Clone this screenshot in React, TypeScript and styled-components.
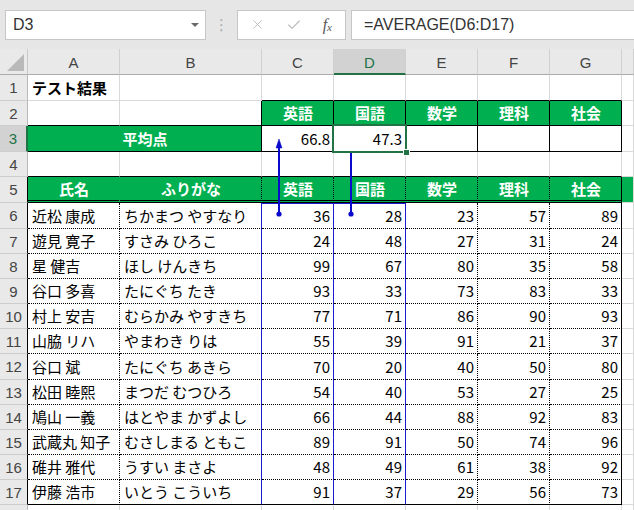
import React from "react";
import styled, { createGlobalStyle, css } from "styled-components";
import { X, Check } from "lucide-react";

const GlobalStyle = createGlobalStyle`
	html, body {
		margin: 0;
		padding: 0;
		background: #ffffff;
		overflow: hidden;
	}
`;

const GREEN = "#00b050";
const SELECT = "#217346";
const GRID = "1px solid #d9d9d9";
const BLACK = "1px solid #000000";
const DOT = "1px dotted #000000";
const BLUE = "1px solid #1a1ad0";
const DOUBLE = "3px double #000000";

const COLS = ["A", "B", "C", "D", "E", "F", "G", ""];
const ROW_HEIGHTS = [26, 25, 26, 25, 26, 26, 25, 25, 25, 25, 25, 26, 25, 25, 25, 25, 25, 20];

const subjects = ["英語", "国語", "数学", "理科", "社会"];

const students: [string, string, number[]][] = [
	["近松 康成", "ちかまつ やすなり", [36, 28, 23, 57, 89]],
	["遊見 寛子", "すさみ ひろこ", [24, 48, 27, 31, 24]],
	["星 健吉", "ほし けんきち", [99, 67, 80, 35, 58]],
	["谷口 多喜", "たにぐち たき", [93, 33, 73, 83, 33]],
	["村上 安吉", "むらかみ やすきち", [77, 71, 86, 90, 93]],
	["山脇 リハ", "やまわき りは", [55, 39, 91, 21, 37]],
	["谷口 斌", "たにぐち あきら", [70, 20, 40, 50, 80]],
	["松田 睦熙", "まつだ むつひろ", [54, 40, 53, 27, 25]],
	["鳩山 一義", "はとやま かずよし", [66, 44, 88, 92, 83]],
	["武蔵丸 知子", "むさしまる ともこ", [89, 91, 50, 74, 96]],
	["碓井 雅代", "うすい まさよ", [48, 49, 61, 38, 92]],
	["伊藤 浩市", "いとう こういち", [91, 37, 29, 56, 73]],
];

const App = () => {
	const dataRight = [DOT, BLUE, BLUE, BLUE, DOT, DOT, BLACK, GRID];

	const rows: React.ReactNode[] = [];

	// row 1
	rows.push(
		<RowHead key="h1">1</RowHead>,
		<Cell key="1a" $bold>テスト結果</Cell>,
		...COLS.slice(1).map((c, i) => (
			<Cell key={"1" + c} $bottom={i >= 1 && i <= 5 ? BLACK : GRID} />
		))
	);

	// row 2
	rows.push(
		<RowHead key="h2">2</RowHead>,
		<Cell key="2a" $bottom={BLACK} />,
		<Cell key="2b" $bottom={BLACK} $right={BLACK} />,
		...subjects.map((s) => (
			<Cell key={"2" + s} $fill $bold $align="center" $right={BLACK} $bottom={BLACK}>
				{s}
			</Cell>
		)),
		<Cell key="2h" />
	);

	// row 3
	rows.push(
		<RowHead key="h3" $selected>3</RowHead>,
		<Cell key="3ab" $span={2} $fill $bold $align="center" $right={BLACK} $bottom={BLACK}>
			平均点
		</Cell>,
		<Cell key="3c" $align="right" $right={BLACK} $bottom={BLACK}>66.8</Cell>,
		<Cell key="3d" $align="right" $right={BLACK} $bottom={BLACK} $active>47.3</Cell>,
		<Cell key="3e" $right={BLACK} $bottom={BLACK} />,
		<Cell key="3f" $right={BLACK} $bottom={BLACK} />,
		<Cell key="3g" $right={BLACK} $bottom={BLACK} />,
		<Cell key="3h" />
	);

	// row 4
	rows.push(
		<RowHead key="h4">4</RowHead>,
		...COLS.map((c, i) => <Cell key={"4" + i} $bottom={i < 7 ? BLACK : GRID} />)
	);

	// row 5
	const heads = ["氏名", "ふりがな", ...subjects];
	const headRight = [`1px solid ${GREEN}`, DOT, DOT, DOT, DOT, DOT, BLACK];
	rows.push(
		<RowHead key="h5" $edge>5</RowHead>,
		...heads.map((h, i) => (
			<Cell key={"5" + h} $fill $bold $align="center" $right={headRight[i]} $bottom={DOUBLE}>
				{h}
			</Cell>
		)),
		<Cell key="5h" $fill />
	);

	// rows 6-17
	students.forEach(([name, kana, scores], r) => {
		const last = r === students.length - 1;
		const bottom = last ? BLACK : DOT;
		const n = r + 6;
		rows.push(
			<RowHead key={"h" + n} $edge>{n}</RowHead>,
			<Cell key={n + "a"} $right={dataRight[0]} $bottom={bottom}>{name}</Cell>,
			<Cell key={n + "b"} $right={dataRight[1]} $bottom={bottom}>{kana}</Cell>,
			...scores.map((v, i) => (
				<Cell
					key={n + "s" + i}
					$align="right"
					$right={dataRight[i + 2]}
					$bottom={bottom}
					$blueTop={r === 0 && i < 2}
				>
					{v}
				</Cell>
			)),
			<Cell key={n + "h"} />
		);
	});

	// row 18, cut off by the window
	rows.push(<RowHead key="h18" />, ...COLS.map((c, i) => <Cell key={"18" + i} />));

	return (
		<Page>
			<GlobalStyle />
			<FormulaBar>
				<NameBox>
					<span>D3</span>
					<Caret />
				</NameBox>
				<Grip>⋮</Grip>
				<IconBox>
					<X size={15} strokeWidth={1.4} color="#b8b8b8" />
					<Check size={16} strokeWidth={1.6} color="#b8b8b8" />
					<Fx>
						f<sub>x</sub>
					</Fx>
				</IconBox>
				<FormulaBox>=AVERAGE(D6:D17)</FormulaBox>
			</FormulaBar>

			<Sheet>
				<Corner />
				{COLS.map((c, i) => (
					<ColHead key={"c" + i} $selected={c === "D"}>
						{c}
					</ColHead>
				))}
				{rows}
			</Sheet>

			<Arrows width={634} height={510} viewBox="0 0 634 510">
				{[279, 351].map((x) => (
					<g key={x} fill="#0a0acc" stroke="#0a0acc">
						<line x1={x} y1={214} x2={x} y2={146} strokeWidth={2} />
						<polygon points={`${x},139 ${x - 3},148 ${x + 3},148`} strokeWidth={0.5} />
						<circle cx={x} cy={214} r={2.6} stroke="none" />
					</g>
				))}
			</Arrows>
		</Page>
	);
};

const Page = styled.div`
	position: relative;
	width: 634px;
	height: 510px;
	overflow: hidden;
	background: #ffffff;
`;

const FormulaBar = styled.div`
	display: flex;
	align-items: center;
	height: 49px;
	padding-left: 5px;
	background: #e6e6e6;
	box-sizing: border-box;
	font-family: "Liberation Sans", Arial, sans-serif;
`;

const NameBox = styled.div`
	display: flex;
	align-items: center;
	justify-content: space-between;
	width: 201px;
	height: 30px;
	box-sizing: border-box;
	padding: 0 6px 0 7px;
	background: #ffffff;
	border: 1px solid #c6c6c6;
	font-size: 16px;
	color: #333333;
`;

const Caret = styled.span`
	width: 0;
	height: 0;
	border-left: 4px solid transparent;
	border-right: 4px solid transparent;
	border-top: 4px solid #6a6a6a;
	margin-top: 1px;
`;

const Grip = styled.div`
	width: 31px;
	text-align: center;
	color: #a8a8a8;
	font-size: 15px;
	font-family: "DejaVu Sans", sans-serif;
`;

const IconBox = styled.div`
	display: flex;
	align-items: center;
	justify-content: space-between;
	width: 109px;
	height: 30px;
	box-sizing: border-box;
	padding: 0 13px 0 12px;
	background: #ffffff;
	border: 1px solid #c6c6c6;
`;

const Fx = styled.span`
	font-family: "Liberation Serif", "DejaVu Serif", serif;
	font-style: italic;
	font-size: 16px;
	color: #555555;

	sub {
		font-size: 11px;
		vertical-align: -1px;
	}
`;

const FormulaBox = styled.div`
	display: flex;
	align-items: center;
	flex: 1;
	height: 30px;
	margin-left: 5px;
	margin-right: -2px;
	box-sizing: border-box;
	padding-left: 12px;
	background: #ffffff;
	border: 1px solid #c6c6c6;
	font-size: 16px;
	color: #333333;
`;

const Sheet = styled.div`
	display: grid;
	grid-template-columns: 28px 92px 142px 72px 72px 72px 72px 72px 1fr;
	grid-template-rows: 26px ${ROW_HEIGHTS.map((h) => h + "px").join(" ")};
	width: 634px;
	font-family: "Noto Sans CJK JP", "Liberation Sans", sans-serif;
	font-size: 15px;
	color: #000000;
`;

const headerBase = css`
	display: flex;
	align-items: center;
	justify-content: center;
	box-sizing: border-box;
	background: #e9e9e9;
	font-family: "Liberation Sans", Arial, sans-serif;
	font-size: 15px;
	color: #444444;
`;

const Corner = styled.div`
	${headerBase};
	position: relative;
	border-right: 1px solid #c8c8c8;
	border-bottom: 1px solid #ababab;

	&::after {
		content: "";
		position: absolute;
		right: 3px;
		bottom: 3px;
		width: 17px;
		height: 17px;
		background: #b9b9b9;
		clip-path: polygon(100% 0, 100% 100%, 0 100%);
	}
`;

const ColHead = styled.div<{ $selected?: boolean }>`
	${headerBase};
	border-right: 1px solid #d0d0d0;
	border-bottom: 1px solid #ababab;
	padding-top: 2px;

	${(p) =>
		p.$selected &&
		css`
			background: #d2d2d2;
			color: ${SELECT};
			border-bottom: 2px solid ${SELECT};
		`}
`;

const RowHead = styled.div<{ $selected?: boolean; $edge?: boolean }>`
	${headerBase};
	border-right: 1px solid ${(p) => (p.$edge ? "#000000" : "#b8b8b8")};
	border-bottom: 1px solid #cdcdcd;

	${(p) =>
		p.$selected &&
		css`
			background: #d2d2d2;
			color: ${SELECT};
			border-right: 2px solid ${SELECT};
		`}
`;

interface ICell {
	$right?: string;
	$bottom?: string;
	$fill?: boolean;
	$bold?: boolean;
	$align?: "left" | "center" | "right";
	$span?: number;
	$active?: boolean;
	$blueTop?: boolean;
}

const Cell = styled.div<ICell>`
	position: relative;
	display: flex;
	align-items: center;
	justify-content: ${(p) =>
		p.$align === "center" ? "center" : p.$align === "right" ? "flex-end" : "flex-start"};
	grid-column: span ${(p) => p.$span || 1};
	box-sizing: border-box;
	min-width: 0;
	padding: 0 3px 1px 4px;
	white-space: nowrap;
	overflow: visible;
	background: ${(p) => (p.$fill ? GREEN : "#ffffff")};
	color: ${(p) => (p.$fill ? "#ffffff" : "#000000")};
	font-weight: ${(p) => (p.$bold ? 700 : 400)};
	border-right: ${(p) => p.$right || GRID};
	border-bottom: ${(p) => p.$bottom || GRID};

	${(p) =>
		p.$blueTop &&
		css`
			box-shadow: inset 0 1px 0 #1a1ad0;
		`}

	${(p) =>
		p.$active &&
		css`
			z-index: 2;

			&::after {
				content: "";
				position: absolute;
				top: -2px;
				left: -2px;
				right: -2px;
				bottom: -2px;
				border: 2px solid ${SELECT};
			}

			&::before {
				content: "";
				position: absolute;
				right: -5px;
				bottom: -5px;
				width: 5px;
				height: 5px;
				background: ${SELECT};
				border: 1px solid #ffffff;
				z-index: 3;
			}
		`}
`;

const Arrows = styled.svg`
	position: absolute;
	top: 0;
	left: 0;
	pointer-events: none;
`;

export default App;
